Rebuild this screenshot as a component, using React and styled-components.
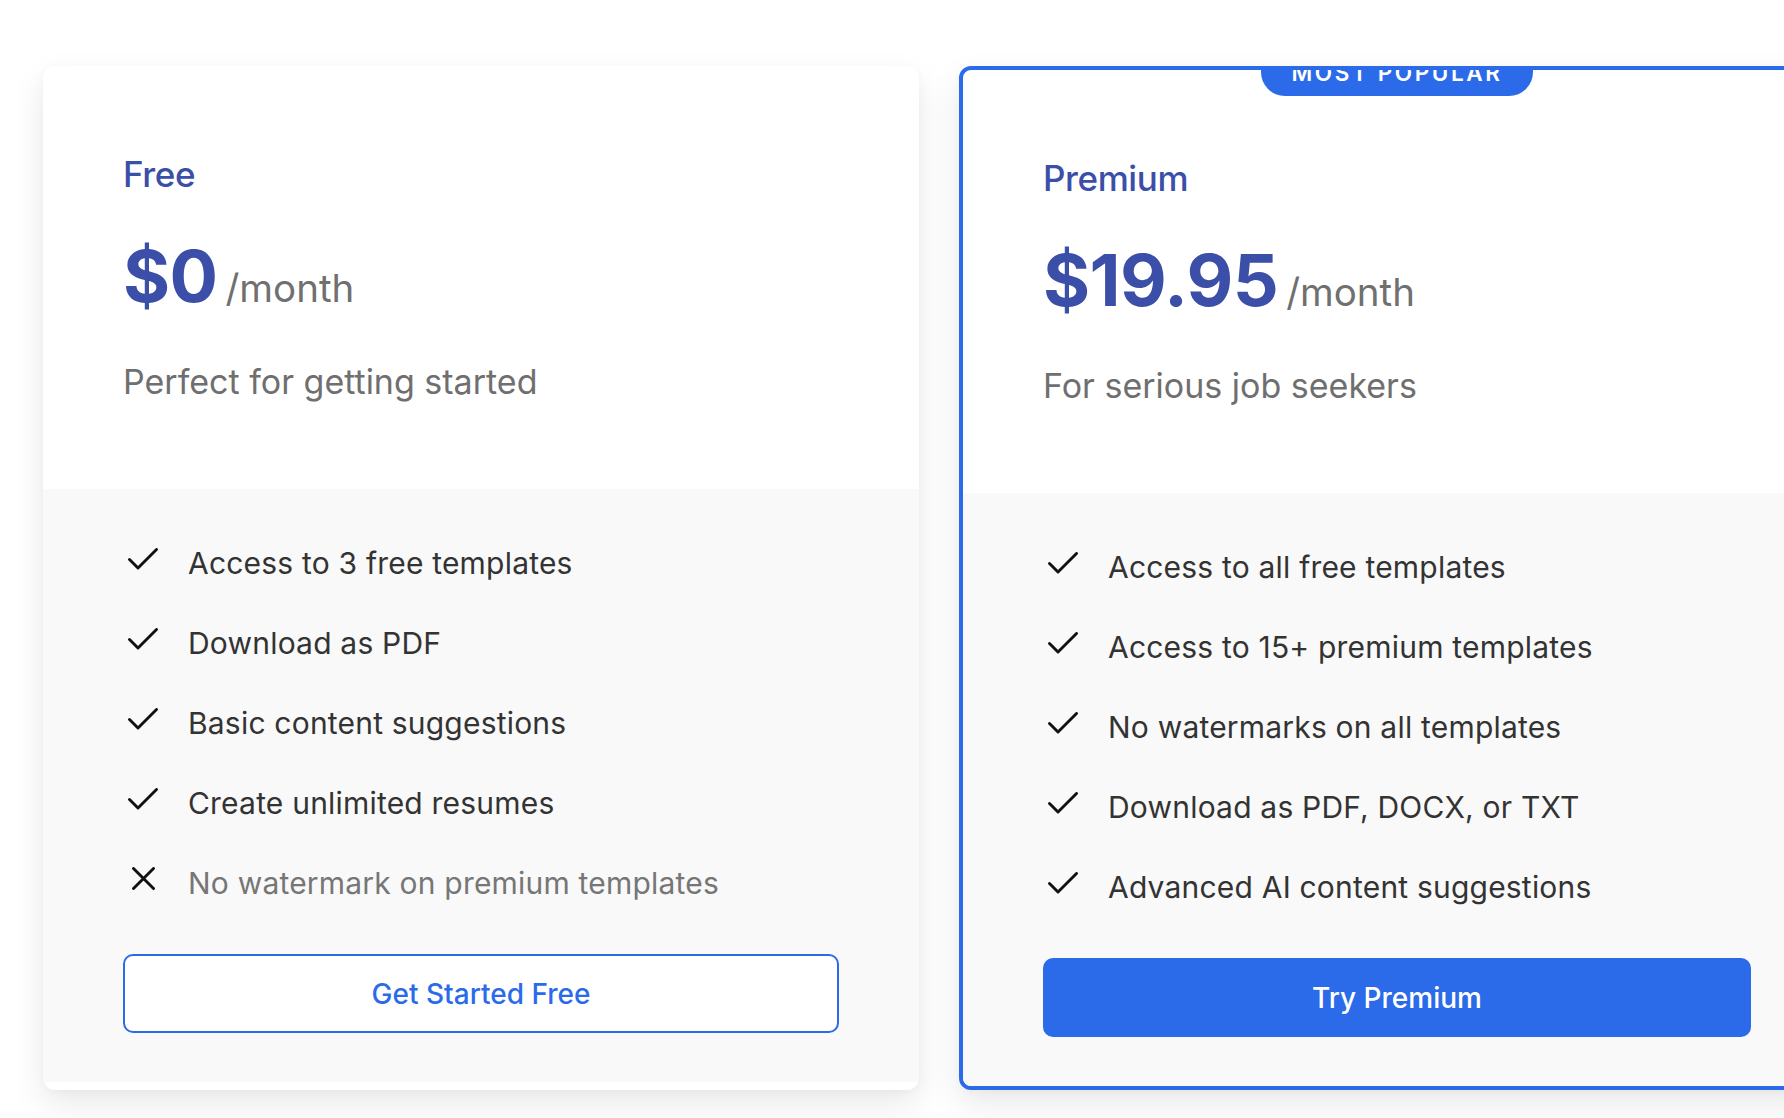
import React from "react";
import styled, { createGlobalStyle } from "styled-components";

const GlobalStyle = createGlobalStyle`
  html, body {
    margin: 0;
    padding: 0;
    background: #ffffff;
    overflow: hidden;
  }
  body {
    font-family: Inter, "Noto Sans", "Liberation Sans", sans-serif;
    -webkit-font-smoothing: antialiased;
  }
`;

const Page = styled.main`
  box-sizing: border-box;
  width: max-content;
  padding: 66px 0 60px 43px;
`;

const Grid = styled.div`
  display: grid;
  grid-template-columns: repeat(2, 876px);
  gap: 40px;
  align-items: stretch;
`;

const Card = styled.section`
  position: relative;
  box-sizing: border-box;
  height: 1024px;
  background: #ffffff;
  border-radius: 12px;
  overflow: hidden;
  border: ${(p) => (p.$featured ? "4px solid #2b6be9" : "0 solid transparent")};
  box-shadow: 0 14px 34px rgba(0, 0, 0, 0.09), 0 2px 8px rgba(0, 0, 0, 0.03);
`;

const Badge = styled.div`
  position: absolute;
  top: -16px;
  left: 50%;
  transform: translateX(-50%);
  box-sizing: border-box;
  width: 272px;
  padding: 6px 0 10px;
  background: #2b6be9;
  color: #ffffff;
  border-radius: 0 0 24px 24px;
  font-size: 22.5px;
  line-height: 26px;
  font-weight: 600;
  letter-spacing: 2.6px;
  text-align: center;
  text-transform: uppercase;
`;

const Header = styled.div`
  box-sizing: border-box;
  height: 423px;
  padding: 87px 80px 0;
`;

const PlanName = styled.h3`
  margin: 0;
  font-size: 35px;
  line-height: 42px;
  font-weight: 500;
  letter-spacing: -0.4px;
  color: #3b4ea8;
`;

const PriceRow = styled.div`
  display: flex;
  align-items: baseline;
  margin-top: 41px;
`;

const Amount = styled.span`
  font-size: 72px;
  line-height: 80px;
  font-weight: 700;
  letter-spacing: -0.6px;
  color: #3b4ea8;
`;

const Period = styled.span`
  margin-left: 8px;
  font-size: 38.5px;
  font-weight: 400;
  letter-spacing: 0;
  color: #707070;
`;

const Description = styled.p`
  margin: 46px 0 0;
  font-size: 34px;
  line-height: 40px;
  font-weight: 400;
  letter-spacing: 0;
  color: #6f6f6f;
`;

const Body = styled.div`
  box-sizing: border-box;
  height: 593px;
  padding: 52px 80px 0;
  background: #f9f9f9;
`;

const Features = styled.ul`
  list-style: none;
  margin: 0;
  padding: 0;
  display: flex;
  flex-direction: column;
  gap: 36px;
`;

const Feature = styled.li`
  display: flex;
  align-items: flex-start;
  gap: 25px;
  font-size: 30px;
  line-height: 44px;
  letter-spacing: 0.2px;
  color: ${(p) => (p.$off ? "#767676" : "#333333")};
`;

const IconBox = styled.span`
  flex: none;
  width: 40px;
  height: 35px;
  display: flex;
  align-items: center;
  justify-content: center;
  color: #111111;
`;

const Button = styled.button`
  display: block;
  box-sizing: border-box;
  width: 100%;
  height: 79px;
  margin-top: 49px;
  border-radius: 10px;
  border: 2px solid #2b6be9;
  background: ${(p) => (p.$primary ? "#2b6be9" : "#ffffff")};
  color: ${(p) => (p.$primary ? "#ffffff" : "#2b6be9")};
  font-family: inherit;
  font-size: 28px;
  font-weight: 500;
  letter-spacing: 0;
  cursor: pointer;
`;

const CheckIcon = () => (
  <svg width="30" height="22" viewBox="0 0 30 22" fill="none" aria-hidden="true">
    <polyline
      points="1.5,11.5 10,20 28.5,1.5"
      stroke="currentColor"
      strokeWidth="2.9"
      strokeLinecap="round"
      strokeLinejoin="round"
    />
  </svg>
);

const CrossIcon = () => (
  <svg width="23" height="23" viewBox="0 0 23 23" fill="none" aria-hidden="true">
    <path
      d="M1.5 1.5 L21.5 21.5 M21.5 1.5 L1.5 21.5"
      stroke="currentColor"
      strokeWidth="2.9"
      strokeLinecap="round"
    />
  </svg>
);

const plans = [
  {
    name: "Free",
    price: "$0",
    description: "Perfect for getting started",
    features: [
      { text: "Access to 3 free templates" },
      { text: "Download as PDF" },
      { text: "Basic content suggestions" },
      { text: "Create unlimited resumes" },
      { text: "No watermark on premium templates", off: true },
    ],
    cta: "Get Started Free",
  },
  {
    name: "Premium",
    price: "$19.95",
    description: "For serious job seekers",
    featured: true,
    features: [
      { text: "Access to all free templates" },
      { text: "Access to 15+ premium templates" },
      { text: "No watermarks on all templates" },
      { text: "Download as PDF, DOCX, or TXT" },
      { text: "Advanced AI content suggestions" },
    ],
    cta: "Try Premium",
  },
];

export default function App() {
  return (
    <>
      <GlobalStyle />
      <Page>
        <Grid>
          {plans.map((plan) => (
            <Card key={plan.name} $featured={plan.featured}>
              {plan.featured && <Badge>Most Popular</Badge>}
              <Header>
                <PlanName>{plan.name}</PlanName>
                <PriceRow>
                  <Amount>{plan.price}</Amount>
                  <Period>/month</Period>
                </PriceRow>
                <Description>{plan.description}</Description>
              </Header>
              <Body>
                <Features>
                  {plan.features.map((f) => (
                    <Feature key={f.text} $off={f.off}>
                      <IconBox>{f.off ? <CrossIcon /> : <CheckIcon />}</IconBox>
                      <span>{f.text}</span>
                    </Feature>
                  ))}
                </Features>
                <Button $primary={plan.featured}>{plan.cta}</Button>
              </Body>
            </Card>
          ))}
        </Grid>
      </Page>
    </>
  );
}
